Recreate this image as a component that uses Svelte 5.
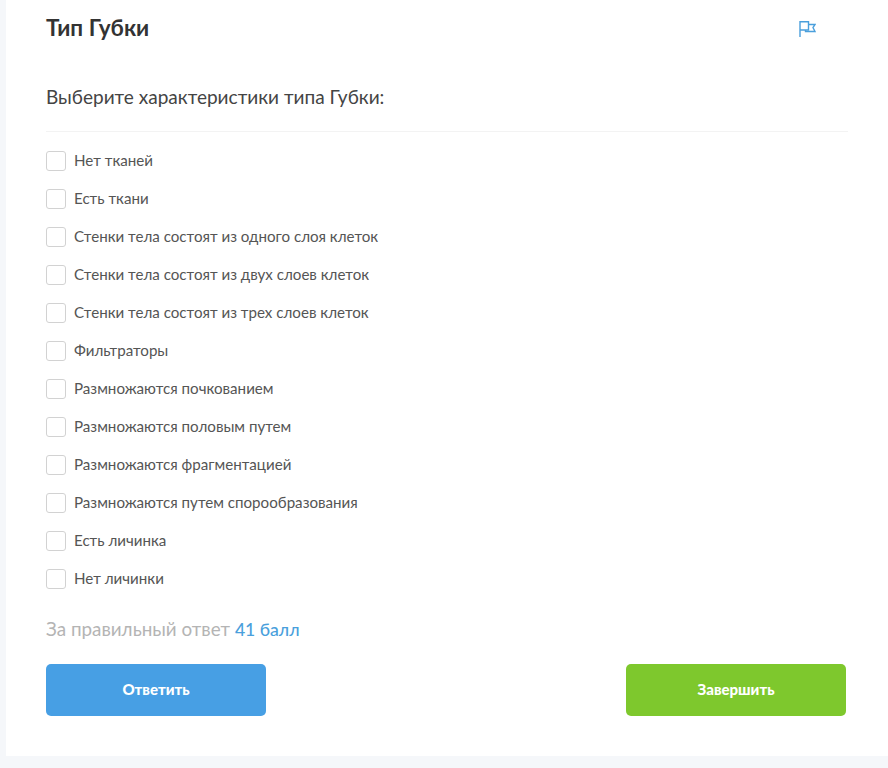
<script>
  const options = [
    'Нет тканей',
    'Есть ткани',
    'Стенки тела состоят из одного слоя клеток',
    'Стенки тела состоят из двух слоев клеток',
    'Стенки тела состоят из трех слоев клеток',
    'Фильтраторы',
    'Размножаются почкованием',
    'Размножаются половым путем',
    'Размножаются фрагментацией',
    'Размножаются путем спорообразования',
    'Есть личинка',
    'Нет личинки'
  ];
</script>

<div class="page">
  <main class="card">
    <header class="head">
      <h1>Тип Губки</h1>
      <svg class="flag" width="17" height="16" viewBox="0 0 17 16" fill="none" stroke="#4a9fdc" stroke-width="1.4">
        <path d="M1 16V.8H9.5V9H1" />
        <path d="M9.5 3.5H16L14 6.5L16 10.5H6.5V9" />
      </svg>
    </header>
    <p class="question">Выберите характеристики типа Губки:</p>
    <ul class="options">
      {#each options as o}
        <li><span class="box"></span><span class="label">{o}</span></li>
      {/each}
    </ul>
    <p class="score">За правильный ответ <b>41 балл</b></p>
    <div class="actions">
      <button class="blue">Ответить</button>
      <button class="green">Завершить</button>
    </div>
  </main>
</div>

<style>
  :global(body) { margin: 0; background: #f5f7fa; }
  .page { height: 768px; padding-left: 6px; box-sizing: border-box; font-family: Lato, "Noto Sans", sans-serif; overflow: hidden; }
  .card { background: #fff; height: 756px; box-sizing: border-box; padding: 0 42px 0 40px; }
  .head { display: flex; justify-content: space-between; align-items: center; height: 56px; padding-right: 30px; }
  h1 { margin: 0 0 2px; font-size: 22.5px; font-weight: 700; color: #333; }
  .flag { margin-top: 2px; }
  .question { margin: 0 -2px 0 0; padding: 26px 0 19px; line-height: 30px; height: 30px; font-size: 19.05px; font-weight: 400; color: #444; border-bottom: 1px solid #f3f3f3; }
  .options { list-style: none; margin: 0; padding: 10px 0 0; }
  li { display: flex; align-items: center; gap: 8px; height: 38px; font-size: 15.15px; color: #555; }
  .label { margin-top: -3px; }
  .box { width: 18px; height: 18px; border: 1px solid #d2d2d2; border-radius: 3px; background: #fff; flex: none; }
  .score { margin: 0; padding-top: 16px; line-height: 30px; font-size: 18.85px; color: #b4b4b4; }
  .score b { font-size: 17.6px; font-weight: 500; color: #4a9fdc; }
  .actions { display: flex; justify-content: space-between; margin-top: 19px; }
  button { width: 220px; height: 52px; padding: 0 0 2px; border: 0; border-radius: 5px; color: #fff; font: 900 15px Lato, "Noto Sans", sans-serif; }
  .blue { background: #479fe4; }
  .green { background: #7ec82d; }
</style>
